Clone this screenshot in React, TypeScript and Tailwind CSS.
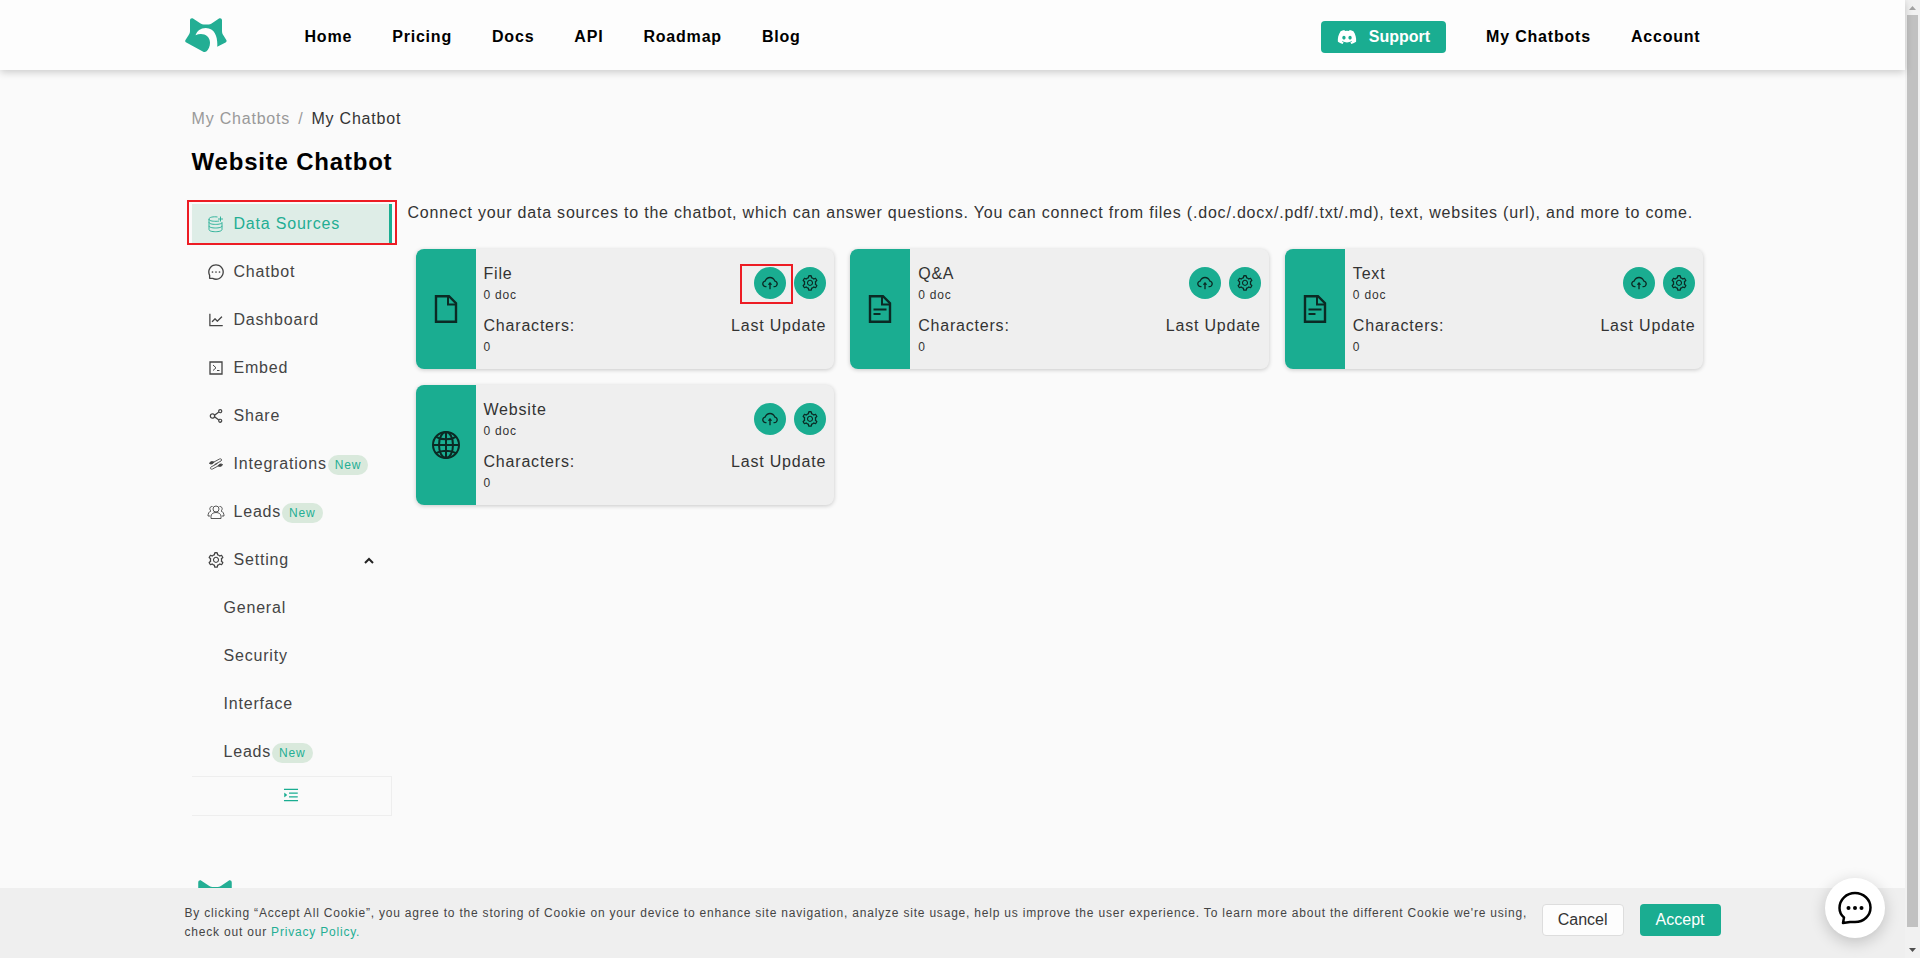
import { useState } from "react";
import {
  AiOutlineCloudUpload,
  AiOutlineLineChart,
  AiOutlineMenuUnfold,
  AiOutlineMessage,
  AiOutlineSetting,
  AiOutlineShareAlt,
} from "react-icons/ai";
import { FaDiscord } from "react-icons/fa";

type IconProps = { className?: string };

const Logo = ({ className }: IconProps) => (
  <svg viewBox="0 0 42 34" className={className} fill="#23ae94" aria-hidden="true">
    <path d="M5 2.200C5 .6 6.600-.4 8 .5l7.600 5c1 .7 2 .9 3 .9h5c1 0 2-.3 3-.9L34 .5c1.400-.9 3 .1 3 1.700V13c0 1.700.5 3.200 1.500 4.600l2.800 4.400c.6 1 .3 2-.7 2.500l-8.400 4.200c.7-8-1.500-18.600-11.400-18.700-5.400 0-8.600 3-10.300 7.300 6.500-3.300 14.500-.3 14.500 7.500 0 3.700-1.600 7-3.400 8.400-1.300.9-2.400.9-3.800.2L1.300 24.600c-1-.6-1.500-1.600-.8-2.600l3.200-5C4.600 15.600 5 14.400 5 12.700z" />
  </svg>
);

const DatabaseIcon = ({ className }: IconProps) => (
  <svg viewBox="0 0 18 18" className={className} fill="none" stroke="currentColor" strokeWidth="0.9" aria-hidden="true">
    <path d="M10.500 2C6.500 1.400 2 2.200 2 4s3 2.300 7 2.300c1.200 0 2.300-.1 3.200-.3" />
    <path d="M2 4v3.200C2 8.700 5 9.400 8.500 9.400S15 8.700 15 7.500M2 7.200v3.600c0 1.500 3 2.200 6.500 2.200s6.500-.7 6.500-2.200V7.500M2 10.800v3.700c0 1.500 3 2.200 6.500 2.200s6.500-.7 6.500-2.200v-3.700" />
    <path d="M13.500 1.500v5M11 4h5" />
  </svg>
);

const EmbedIcon = ({ className }: IconProps) => (
  <svg viewBox="0 0 18 18" className={className} fill="none" stroke="currentColor" aria-hidden="true">
    <path strokeWidth="1.300" d="M3 3h12v12H3z" />
    <path d="m6 6 3 2.800L6 11.500M10 11.500h2.500" />
  </svg>
);

const IntegrationIcon = ({ className }: IconProps) => (
  <svg viewBox="0 0 18 18" className={className} fill="none" stroke="currentColor" strokeWidth="0.9" aria-hidden="true">
    <path d="M6 7.500 12.500 4c1.500-.7 3 .7 1.500 2L7.500 9.500M12 10.500 5.500 14c-1.500.7-3-.7-1.500-2l6.500-3.500" />
    <path fill="currentColor" d="M2.500 8.500C3 6.500 5.500 6 7 7.200 6 9 4 9.500 2.500 8.500zM15.500 9.500c-.5 2-3 2.500-4.500 1.300 1-1.800 3-2.300 4.500-1.300z" />
  </svg>
);

const TeamIcon = ({ className }: IconProps) => (
  <svg viewBox="0 0 18 18" className={className} fill="none" stroke="currentColor" strokeWidth="0.9" aria-hidden="true">
    <circle cx="9" cy="6" r="3" />
    <path d="M4 15.500v-2C4 11 6 9.500 9 9.500s5 1.500 5 4v2z" />
    <path d="M5.500 3.500C3.500 3.200 2.300 5 3 6.700c.2.600.5 1 1 1.300-2 .6-3 2.500-3 5h2.200M12.500 3.500c2-.3 3.200 1.500 2.500 3.200-.2.600-.5 1-1 1.300 2 .6 3 2.500 3 5h-2.200" />
  </svg>
);

const FileIcon = ({ className, lines }: IconProps & { lines?: boolean }) => (
  <svg viewBox="0 0 24 28" className={className} fill="none" stroke="currentColor" strokeWidth="2.400" aria-hidden="true">
    <path d="M2 1.200h13l7 7v18.600H2z" />
    <path strokeWidth="2" d="M14 1v8.500h8" />
    {lines && <path strokeWidth="2" d="M5.500 14.500h13M5.500 19h7" />}
  </svg>
);

const GlobeIcon = ({ className }: IconProps) => (
  <svg viewBox="0 0 28 28" className={className} fill="none" stroke="currentColor" strokeWidth="2" aria-hidden="true">
    <circle cx="14" cy="14" r="13" />
    <ellipse cx="14" cy="14" rx="7" ry="13" />
    <path d="M14 1v26M1 14h26M4 5.800c5.500 3.400 14.500 3.400 20 0M4 22.200c5.500-3.400 14.500-3.400 20 0" />
  </svg>
);

const ChatBubbleIcon = ({ className }: IconProps) => (
  <svg viewBox="0 0 34 34" className={className} fill="none" stroke="currentColor" strokeWidth="2.500" aria-hidden="true">
    <path strokeLinejoin="round" d="M6 26.500C3 24 1.500 20.500 1.500 17c0-8.500 7-15 15.500-15s15.500 6.500 15.500 14.500S26 31 17 31c-2 0-3.500-.1-5-.1L5 32z" />
    <g fill="currentColor" stroke="none">
      <circle cx="10.500" cy="17" r="2" />
      <circle cx="17" cy="17" r="2" />
      <circle cx="23.500" cy="17" r="2" />
    </g>
  </svg>
);

const navLinks = ["Home", "Pricing", "Docs", "API", "Roadmap", "Blog"];

const menu = [
  { label: "Data Sources", Icon: DatabaseIcon, active: true },
  { label: "Chatbot", Icon: AiOutlineMessage },
  { label: "Dashboard", Icon: AiOutlineLineChart },
  { label: "Embed", Icon: EmbedIcon },
  { label: "Share", Icon: AiOutlineShareAlt },
  { label: "Integrations", Icon: IntegrationIcon, isNew: true },
  { label: "Leads", Icon: TeamIcon, isNew: true },
];

const settings = [
  { label: "General" },
  { label: "Security" },
  { label: "Interface" },
  { label: "Leads", isNew: true },
];

const sources = [
  { title: "File", icon: <FileIcon className="h-7 w-6" />, marked: true },
  { title: "Q&A", icon: <FileIcon className="h-7 w-6" lines /> },
  { title: "Text", icon: <FileIcon className="h-7 w-6" lines /> },
  { title: "Website", icon: <GlobeIcon className="size-7" /> },
];

const NewBadge = () => (
  <span className="mt-0.5 ml-px rounded-full bg-[#d9e9dc] px-[7px] text-xs leading-5 text-[#23ae94]">New</span>
);

const Header = () => (
  <header className="relative z-10 bg-[#fdfdfd] shadow-[0_2px_8px_rgba(0,0,0,0.2)]">
    <div className="mx-auto flex h-[70px] max-w-[1536px] items-center pr-5 font-bold text-black">
      <a href="#" aria-label="Homepage">
        <Logo className="h-[34px] w-[42px]" />
      </a>
      <nav className="ml-[78px] flex gap-10 pt-1">
        {navLinks.map((link) => (
          <a key={link} href="#">{link}</a>
        ))}
      </nav>
      <div className="ml-auto flex items-center gap-10 pt-1">
        <a href="#" className="flex h-8 items-center gap-3 rounded bg-[#1aad91] px-4 tracking-normal text-white">
          <FaDiscord className="size-5" />
          Support
        </a>
        <a href="#">My Chatbots</a>
        <a href="#">Account</a>
      </div>
    </div>
  </header>
);

const Sidebar = () => {
  const [open, setOpen] = useState(true);

  return (
    <aside className="w-[200px] shrink-0 text-[#444]">
      <ul className="flex flex-col gap-2">
        {menu.map(({ label, Icon, active, isNew }) => (
          <li key={label} className="relative">
            <a
              href="#"
              className={`flex h-10 items-center gap-[9px] pl-[15px] ${active ? "border-r-3 border-[#1aad91] bg-[#deede7] text-[#23ae94]" : ""}`}
            >
              <Icon className="size-[18px]" />
              <span className="flex items-center">
                {label}
                {isNew && <NewBadge />}
              </span>
            </a>
            {active && <span className="absolute -inset-x-[5px] -top-1 -bottom-px border-2 border-[#ed1c24]" />}
          </li>
        ))}
        <li>
          <button
            onClick={() => setOpen(!open)}
            className="flex h-10 w-full items-center gap-[9px] pr-[18px] pl-[15px] tracking-wider"
          >
            <AiOutlineSetting className="size-[18px]" />
            Setting
            <svg viewBox="0 0 10 8" className="ml-auto h-2 w-2.5" fill="none" stroke="#222" strokeWidth="2" aria-hidden="true">
              <path d="m1 7 4-4 4 4" />
            </svg>
          </button>
        </li>
        {open &&
          settings.map(({ label, isNew }) => (
            <li key={label}>
              <a href="#" className="flex h-10 items-center pl-8">
                {label}
                {isNew && <NewBadge />}
              </a>
            </li>
          ))}
      </ul>
      <button
        aria-label="Collapse menu"
        className="mt-1 flex h-10 w-full items-center justify-center border-y border-r border-[#eee] pb-0.5 text-[#1aad91]"
      >
        <AiOutlineMenuUnfold className="size-[18px]" />
      </button>
    </aside>
  );
};

const SourceCard = ({ title, icon, marked }: (typeof sources)[number]) => (
  <article className="flex h-[120px] overflow-hidden rounded-lg bg-[#efefef] text-[#333] shadow-[0_1px_4px_rgba(0,0,0,0.2)]">
    <div className="flex w-[60px] items-center justify-center bg-[#1aad91] text-[#0b2a24]">{icon}</div>
    <div className="flex flex-1 flex-col gap-2.5 px-2 pt-3">
      <div className="flex justify-between">
        <div>
          <h2 className="leading-[26px]">{title}</h2>
          <p className="text-xs leading-4">0 doc</p>
        </div>
        <div className="flex items-start gap-2 pt-1.5">
          <div className="relative">
            <button
              aria-label={`Upload ${title}`}
              className="flex size-8 items-center justify-center rounded-full bg-[#1aad91] text-[#0b2a24]"
            >
              <AiOutlineCloudUpload className="size-[18px]" />
            </button>
            {marked && <span className="absolute -top-[3px] -right-[7px] -bottom-[5px] -left-[14px] border-2 border-[#ed1c24]" />}
          </div>
          <button
            aria-label={`${title} settings`}
            className="flex size-8 items-center justify-center rounded-full bg-[#1aad91] text-[#0b2a24]"
          >
            <AiOutlineSetting className="size-[18px]" />
          </button>
        </div>
      </div>
      <div className="flex justify-between leading-[26px]">
        <div>
          <p>Characters:</p>
          <p className="text-xs leading-4">0</p>
        </div>
        <p>Last Update</p>
      </div>
    </div>
  </article>
);

const CookieBar = () => (
  <div className="fixed right-[15px] bottom-0 left-0 z-20 bg-[#efefef]">
    <div className="mx-auto flex h-[70px] max-w-[1536px] items-start gap-3 pt-4">
      <p className="flex-1 text-xs leading-[19px] text-[#444]">
        By clicking “Accept All Cookie”, you agree to the storing of Cookie on your device to enhance site navigation,
        analyze site usage, help us improve the user experience. To learn more about the different Cookie we're using,
        check out our{" "}
        <a href="#" className="text-[#23ae94]">Privacy Policy.</a>
      </p>
      <div className="flex gap-4">
        <button className="h-8 rounded border border-[#ddd] bg-[#fdfdfd] px-[15px] tracking-normal text-[#333]">
          Cancel
        </button>
        <button className="h-8 rounded bg-[#1aad91] px-4 tracking-normal text-white">Accept</button>
      </div>
    </div>
  </div>
);

const ScrollBar = () => (
  <div className="flex w-[15px] shrink-0 flex-col items-center bg-[#f1f1f1]">
    <svg viewBox="0 0 15 15" className="size-[15px]" fill="#a3a3a3" aria-hidden="true">
      <path d="M4 10h7L7.500 6z" />
    </svg>
    <div className="w-[11px] flex-1 bg-[#c1c1c1]" />
    <svg viewBox="0 0 15 31" className="h-[31px] w-[15px]" fill="#505050" aria-hidden="true">
      <path d="M4 21h7l-3.500 4z" />
    </svg>
  </div>
);

const App = () => {
  return (
    <div className="flex h-screen overflow-hidden bg-[#fafafa] font-['Liberation_Sans',Arial,sans-serif] text-base">
      <div className="min-w-0 flex-1 tracking-wider">
        <Header />
        <main className="mx-auto max-w-[1536px] pt-[37px] pr-[9px] pl-[7px]">
          <nav aria-label="Breadcrumb" className="flex gap-2 text-[#999]">
            <a href="#">My Chatbots</a>
            <span>/</span>
            <span className="text-[#333]">My Chatbot</span>
          </nav>
          <h1 className="mt-[15px] text-2xl font-bold text-black">Website Chatbot</h1>
          <div className="mt-[26px] flex gap-4">
            <Sidebar />
            <section className="min-w-0 flex-1">
              <p className="-mt-[3px] text-[#333]">
                Connect your data sources to the chatbot, which can answer questions. You can connect from files
                (.doc/.docx/.pdf/.txt/.md), text, websites (url), and more to come.
              </p>
              <div className="mt-6 grid grid-cols-3 gap-4 px-2">
                {sources.map((source) => (
                  <SourceCard key={source.title} {...source} />
                ))}
              </div>
            </section>
          </div>
        </main>
        <footer className="mx-auto max-w-[1536px] px-2 pt-16">
          <Logo className="h-9 w-11" />
        </footer>
        <CookieBar />
        <button
          aria-label="Open chat"
          className="fixed right-[35px] bottom-5 z-30 flex size-[60px] items-center justify-center rounded-full bg-white text-black shadow-[0_4px_16px_rgba(0,0,0,0.2)]"
        >
          <ChatBubbleIcon className="size-[34px]" />
        </button>
      </div>
      <ScrollBar />
    </div>
  );
};

export default App;
